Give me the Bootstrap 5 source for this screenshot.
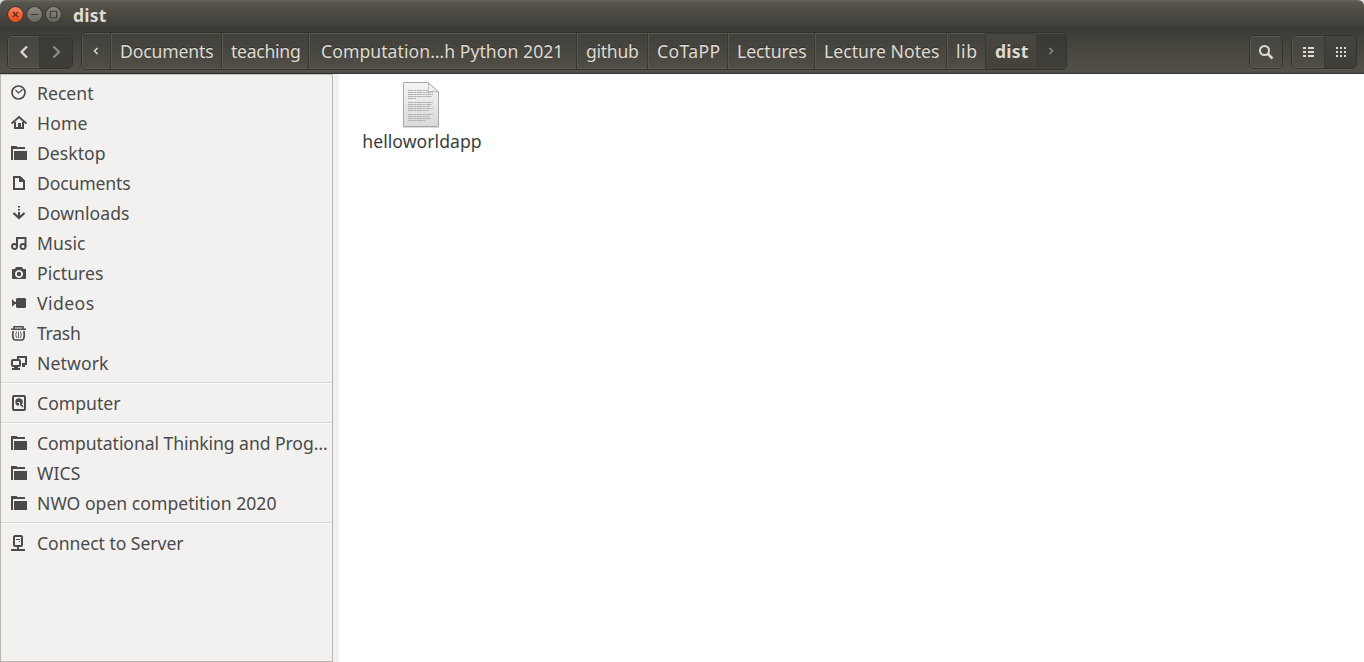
<!DOCTYPE html>
<html lang="en">
<head>
<meta charset="utf-8">
<title>dist</title>
<link rel="stylesheet" href="https://cdn.jsdelivr.net/npm/bootstrap@5.3.0/dist/css/bootstrap.min.css">
<style>
body{font-family:"Noto Sans","Open Sans",sans-serif;font-size:17.6px;line-height:24px;background:#dcdad8;color:#3c3c3c}
.window{height:662px;width:1364px}
.titlebar{height:29px;background:linear-gradient(#6a675f 0,#5b584f 2px,#56534b 4px,#3e3d38 27px,#383733 28px,#383733);border-radius:6px 6px 0 0;color:#dfdbd2;padding-left:7px}
.dot{width:17px;height:17px;margin-right:2px}
.titlebar .fit{margin-left:9px;line-height:24px}
.toolbar{height:45px;background:linear-gradient(#3d3c37,#525047 43px,#4c4a43 44px,#33322e 44px);padding:3px 7px 0;color:#dfdbd2;text-shadow:0 -1px #33322e}
.tool,.crumbs{border:1px solid #33322d;border-radius:5px;box-shadow:0 1px #5a5850;background:linear-gradient(#454440,#504e46);overflow:hidden}
.tool{height:34px;margin-top:3px}
.tool>a,.crumbs>a{color:inherit;text-decoration:none;box-shadow:inset 0 1px #5a574f,inset 1px 0 #5a574f,inset 0 -1px #5e5b53}
.tool>a+a,.crumbs>a+a{border-left:1px solid #393833}
.crumbs{height:38px;width:986px;margin-left:8px;background:linear-gradient(#403f3a,#504e46);box-shadow:none}
.crumbs>a{flex:none}
.crumbs>a:not(.edge){padding-left:9px}
.tool .sunk{background:linear-gradient(#3b3a35,#3e3d38);box-shadow:inset 0 1px #45433e}
.tool .active-view{background:linear-gradient(#454340,#3f3d38)}
.crumbs .current{background:linear-gradient(#484640,#444239);box-shadow:inset 0 1px #393833}
.crumbs .tail{background:linear-gradient(#393833,#403f39);box-shadow:inset 0 1px #4b4942;border-left:0!important}
.fit{white-space:nowrap;display:inline-block}
.main-area{height:588px}
.places{width:333px;background:#f2f1f0;border:1px solid #b9b5b0;border-top-color:#c5c1bd;padding-top:3px;color:#4a4a4a}
.place{height:30px;padding-left:10px;color:inherit;text-decoration:none}
.place svg{width:16px;height:16px;margin-right:10px;flex:none;fill:none;stroke:#4a4a4a;stroke-width:2}
.place .f{fill:#4a4a4a;stroke:none}
.rule{height:2px;margin:4px 0;background:linear-gradient(#dad8d6 50%,#fcfcfb 50%)}
.gutter{width:6px;background:#f2f1f0}
.files{background:#fff;padding:6px 0 0 23px}
.file{width:120px}
</style>
<script src="https://cdn.jsdelivr.net/npm/bootstrap@5.3.0/dist/js/bootstrap.bundle.min.js"></script>
</head>
<body class="m-0 overflow-hidden">
<svg class="d-none"><defs>
<symbol id="folder" viewBox="0 0 16 16"><path fill="#4a4a4a" stroke="none" d="M0 1h6v1h8v2H2v11H0zM3 6h13v9H3z"/></symbol>
</defs></svg>
<div class="window d-flex flex-column">
  <header class="titlebar d-flex align-items-center">
    <svg class="dot" viewBox="0 0 16 16"><defs><linearGradient id="o" x2="0" y2="1"><stop stop-color="#f48a66"/><stop offset=".5" stop-color="#ee6437"/><stop offset="1" stop-color="#df4d1c"/></linearGradient><linearGradient id="g" x2="0" y2="1"><stop stop-color="#8c8a83"/><stop offset="1" stop-color="#66645d"/></linearGradient></defs><circle cx="8" cy="8" r="7.5" fill="url(#o)" stroke="#3a3630"/><path d="M5.500 5.500l5 5m0-5l-5 5" stroke="#532416" stroke-width="1.200"/></svg>
    <svg class="dot" viewBox="0 0 16 16"><circle cx="8" cy="8" r="7.5" fill="url(#g)" stroke="#3a3832"/><path d="M4.500 8h7" stroke="#3a3832"/></svg>
    <svg class="dot" viewBox="0 0 16 16"><circle cx="8" cy="8" r="7.5" fill="url(#g)" stroke="#3a3832"/><path d="M5 5h6v6H5z" fill="none" stroke="#3a3832"/></svg>
    <span class="fit fw-bold" data-w="33">dist</span>
  </header>
  <nav class="toolbar d-flex">
    <div class="tool d-flex" style="width:66px">
      <a href="#" class="d-flex align-items-center justify-content-center" style="width:31px"><svg width="16" height="16" fill="none" stroke="#dfdbd2" stroke-width="2.200"><path d="M11 2.500L5.500 8l5.500 5.500"/></svg></a>
      <a href="#" class="sunk d-flex align-items-center justify-content-center flex-fill"><svg width="16" height="16" fill="none" stroke="#8f8c84" stroke-width="2.200"><path d="M5.500 2.500L11 8l-5.500 5.500"/></svg></a>
    </div>
    <div class="crumbs d-flex">
      <a href="#" class="edge d-flex align-items-center justify-content-center" style="width:28px"><svg width="8" height="8" fill="none" stroke="#dfdbd2" stroke-width="1.500"><path d="M5.500 1L2.500 4l3 3"/></svg></a>
      <a href="#" class="d-flex align-items-center" style="width:111px"><span class="fit" data-w="93">Documents</span></a>
      <a href="#" class="d-flex align-items-center" style="width:87px"><span class="fit" data-w="69">teaching</span></a>
      <a href="#" class="d-flex align-items-center" style="width:268px"><span class="fit" style="margin-left:3px" data-w="242">Computation…h Python 2021</span></a>
      <a href="#" class="d-flex align-items-center" style="width:71px"><span class="fit" data-w="52">github</span></a>
      <a href="#" class="d-flex align-items-center" style="width:80px"><span class="fit" data-w="63">CoTaPP</span></a>
      <a href="#" class="d-flex align-items-center" style="width:87px"><span class="fit" data-w="69">Lectures</span></a>
      <a href="#" class="d-flex align-items-center" style="width:132px"><span class="fit" data-w="115">Lecture Notes</span></a>
      <a href="#" class="d-flex align-items-center" style="width:39px"><span class="fit" data-w="21">lib</span></a>
      <a href="#" class="current d-flex align-items-center" style="width:51px"><span class="fit fw-bold" data-w="33">dist</span></a>
      <a href="#" class="edge tail d-flex align-items-center justify-content-center flex-fill"><svg width="8" height="8" fill="none" stroke="#8f8c84" stroke-width="1.500"><path d="M2.500 1l3 3-3 3"/></svg></a>
    </div>
    <div class="tool ms-auto d-flex" style="width:34px"><a href="#" class="d-flex align-items-center justify-content-center flex-fill"><svg width="16" height="16" fill="none" stroke="#dfdbd2"><circle cx="6.500" cy="6.500" r="4.500" stroke-width="2"/><path d="M9.500 9.500l5 5" stroke-width="2.500"/></svg></a></div>
    <div class="tool d-flex" style="width:66px;margin-left:8px">
      <a href="#" class="d-flex align-items-center justify-content-center" style="width:32px"><svg width="12" height="10" fill="#dfdbd2"><path d="M1 0h3v2H1zM6 0h6v2H6zM1 4h3v2H1zM6 4h6v2H6zM1 8h3v2H1zM6 8h6v2H6z"/></svg></a>
      <a href="#" class="sunk active-view d-flex align-items-center justify-content-center flex-fill"><svg width="10" height="10" fill="#dfdbd2"><path d="M0 0h2v2H0zM4 0h2v2H4zM8 0h2v2H8zM0 4h2v2H0zM4 4h2v2H4zM8 4h2v2H8zM0 8h2v2H0zM4 8h2v2H4zM8 8h2v2H8z"/></svg></a>
    </div>
  </nav>
  <div class="main-area d-flex">
    <aside class="places">
      <a href="#" class="place d-flex align-items-center"><svg viewBox="0 0 16 16"><circle cx="7.500" cy="7.500" r="6.500" stroke-width="1.700"/><path d="M4.500 5L7.500 8l4-3.500" stroke-width="1.200"/></svg><span class="fit" data-w="56">Recent</span></a>
      <a href="#" class="place d-flex align-items-center"><svg viewBox="0 0 16 16"><path d="M.5 8.500L8 2l7.500 6.500" stroke-width="1.900"/><path class="f" d="M3 7h2v5h2V8h3v4h1V7h2v7H3z"/></svg><span class="fit" data-w="50">Home</span></a>
      <a href="#" class="place d-flex align-items-center"><svg><use href="#folder"/></svg><span class="fit" data-w="68">Desktop</span></a>
      <a href="#" class="place d-flex align-items-center"><svg viewBox="0 0 16 16"><path d="M3 2h6l4 4v8H3z"/><path class="f" d="M8 2h2l4 4v1H8z"/></svg><span class="fit" data-w="93">Documents</span></a>
      <a href="#" class="place d-flex align-items-center"><svg viewBox="0 0 16 16"><path d="M8 1v1.500M8 4v1.500M8 7v5"/><path d="M2.500 8L8 13l5.500-5" stroke-width="2.300"/></svg><span class="fit" data-w="92">Downloads</span></a>
      <a href="#" class="place d-flex align-items-center"><svg viewBox="0 0 16 16"><circle cx="3.500" cy="11.500" r="2.500" stroke-width="1.900"/><circle cx="12" cy="11.500" r="2.500" stroke-width="1.900"/><path d="M6 11.500V3h8.500v8.500"/></svg><span class="fit" data-w="48">Music</span></a>
      <a href="#" class="place d-flex align-items-center"><svg viewBox="0 0 16 16"><path class="f" fill-rule="evenodd" d="M2 4h2l1-2h6l1 2h2q1 0 1 1v8q0 1-1 1H2q-1 0-1-1V5q0-1 1-1zM8 5a4 4 0 1 0 .01 0z"/><circle class="f" cx="8" cy="9" r="2.200"/></svg><span class="fit" data-w="66">Pictures</span></a>
      <a href="#" class="place d-flex align-items-center"><svg viewBox="0 0 16 16"><path class="f" d="M1 4l4 4-4 4zM5 4l1-1h8l1 1v8l-1 1H6l-1-1V9H4V7h1z"/></svg><span class="fit" data-w="57">Videos</span></a>
      <a href="#" class="place d-flex align-items-center"><svg viewBox="0 0 16 16"><path d="M0 4.300h15M3 4V1.800h9V4" stroke-width="1.500"/><path d="M2 6Q1 15 4 15h7q3 0 2-9" stroke-width="1.700"/><path d="M5.500 6.500q-1.500 3 0 6.500M7.500 6.500V13M9.500 6.500q1.500 3 0 6.500" stroke-width=".9"/></svg><span class="fit" data-w="43">Trash</span></a>
      <a href="#" class="place d-flex align-items-center"><svg viewBox="0 0 16 16"><path d="M7 4V2h8v7h-4"/><rect x="1" y="5" width="8" height="6" rx="1"/><path class="f" d="M3 11h4v2h2v2H1v-2h2zM11 10h3v2h-3z"/></svg><span class="fit" data-w="71">Network</span></a>
      <div class="rule"></div>
      <a href="#" class="place d-flex align-items-center"><svg viewBox="0 0 16 16"><rect x="2" y="1" width="12" height="14" rx="1"/><circle class="f" cx="8" cy="7" r="3.700"/><path d="M8 7l4 5" stroke-width="1.500"/><path d="M6.500 7.500h2v4" stroke="#f2f1f0" stroke-width="1"/></svg><span class="fit" data-w="83">Computer</span></a>
      <div class="rule"></div>
      <a href="#" class="place d-flex align-items-center"><svg><use href="#folder"/></svg><span class="fit" data-w="290">Computational Thinking and Prog…</span></a>
      <a href="#" class="place d-flex align-items-center"><svg><use href="#folder"/></svg><span class="fit" data-w="43">WICS</span></a>
      <a href="#" class="place d-flex align-items-center"><svg><use href="#folder"/></svg><span class="fit" data-w="239">NWO open competition 2020</span></a>
      <div class="rule"></div>
      <a href="#" class="place d-flex align-items-center"><svg viewBox="0 0 16 16"><rect x="3" y="1" width="8" height="10" rx="1"/><path d="M5 4.500h4M8 6.500h1" stroke-width="1"/><path d="M7 11v4M0 15h14"/></svg><span class="fit" data-w="146">Connect to Server</span></a>
    </aside>
    <div class="gutter"></div>
    <main class="files flex-fill">
      <div class="file d-flex flex-column align-items-center">
        <svg width="38" height="49" viewBox="0 0 38 49"><defs><linearGradient id="p" x2="0" y2="1"><stop stop-color="#f4f4f4"/><stop offset="1" stop-color="#dadada"/></linearGradient><linearGradient id="c" x1="0" y1="1" x2="1" y2="0"><stop stop-color="#fff"/><stop offset=".5" stop-color="#eee"/><stop offset="1" stop-color="#999"/></linearGradient></defs><path d="M.5 2.500h25l10 9.500v34.500H.5z" fill="url(#p)" stroke="#a8a8a8"/><path d="M0 47.500h36" stroke="#ddd"/><path d="M5 10.500h20M5 12.500h25M5 14.500h25M5 16.500h24M5 18.500h8M5 22.500h25M5 24.500h24M5 26.500h22M5 28.500h25M5 30.500h21M5 34.500h25M5 36.500h21M5 38.500h23M5 40.500h17" stroke="#b2b2b2" stroke-dasharray="5 .5 3 .5"/><path d="M25 2.500q1.500 4 0 9 5-1 10.500.5z" fill="url(#c)" stroke="#aaa" stroke-width=".8"/></svg>
        <span class="fit" data-w="119">helloworldapp</span>
      </div>
    </main>
  </div>
</div>
<script>
document.querySelectorAll('.fit').forEach(function (el) {
  var w = +el.dataset.w + .5, n = el.textContent.length;
  el.style.letterSpacing = (w - el.getBoundingClientRect().width) / n + 'px';
});
</script>
</body>
</html>
